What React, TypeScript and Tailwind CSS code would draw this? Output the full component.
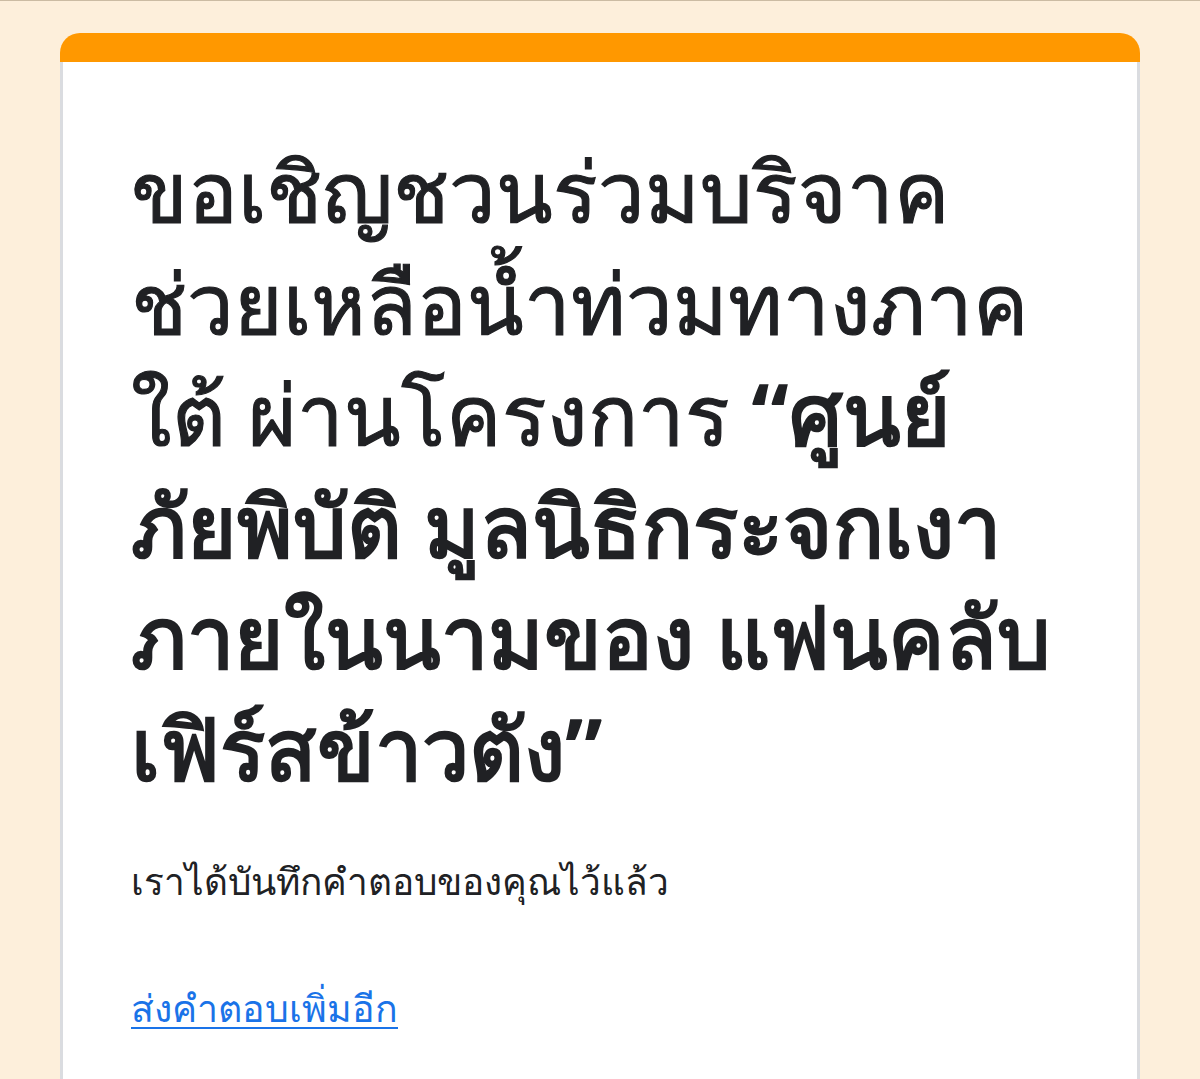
export default function App() {
  return (
    <div className="min-h-[1079px] bg-[#fdefdb] border-t border-[#cbbba3] pt-[32px] px-[60px] font-['Noto_Sans','DejaVu_Sans',sans-serif]">
      <div className="rounded-t-[20px] overflow-hidden">
        <div className="h-[29px] bg-[#ff9800]" />
        <div className="bg-white border-x-[3px] border-[#dadce0] min-h-[1100px] pl-[68px] pr-[40px] pt-[72px]">
          <h1 className="text-[83px] leading-[111.5px] text-[#202124] font-normal">
            <span className="[-webkit-text-stroke:1.2px_#202124]">
              ขอเชิญชวนร่วมบริจาค<br />
              ช่วยเหลือน้ำท่วมทางภาค<br />
              ใต้ ผ่านโครงการ{" "}
            </span>
            <span className="font-bold text-[84.5px]">“ศูนย์</span><br />
            <span className="font-bold text-[84.5px]">ภัยพิบัติ มูลนิธิกระจกเงา<br />
            ภายในนามของ แฟนคลับ<br />
            เฟิร์สข้าวตัง”</span>
          </h1>
          <p className="mt-[54px] text-[37px] leading-[48px] text-[#202124]">เราได้บันทึกคำตอบของคุณไว้แล้ว</p>
          <a href="#" className="inline-block mt-[79px] text-[37.5px] leading-[48px] text-[#1a73e8] underline decoration-[2px] underline-offset-[5px]">ส่งคำตอบเพิ่มอีก</a>
        </div>
      </div>
    </div>
  );
}
